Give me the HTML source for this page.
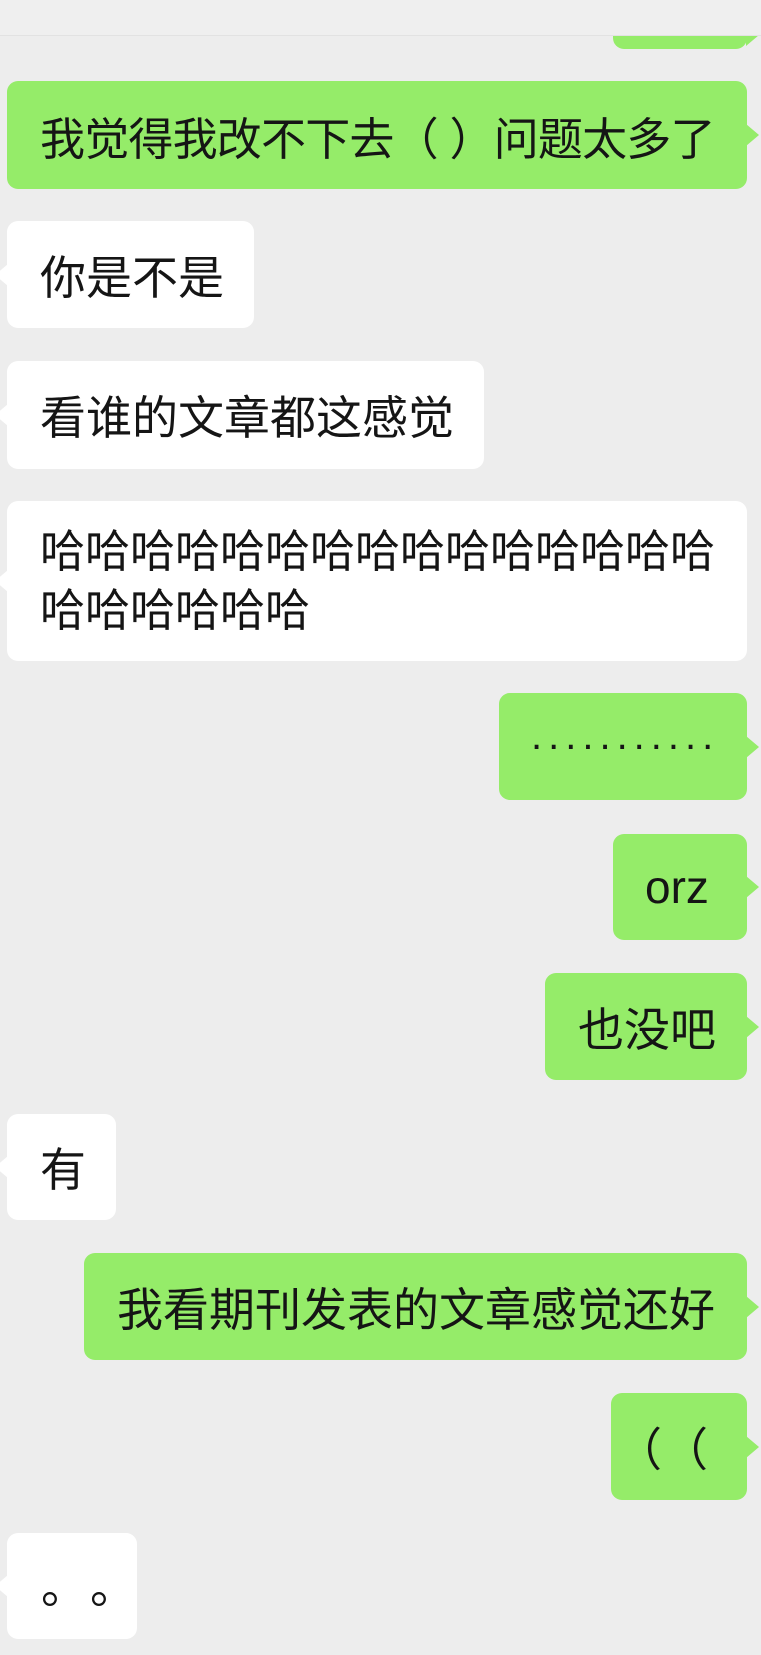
<!DOCTYPE html>
<html><head><meta charset="utf-8"><style>
html,body{margin:0;padding:0}
body{width:761px;height:1655px;background:#ededed;position:relative;overflow:hidden;font-family:"Liberation Sans","Noto Sans CJK SC",sans-serif;color:#151515;text-spacing-trim:space-all}
.top{position:absolute;left:0;top:0;width:761px;height:35px;background:#efefef;border-bottom:1px solid #e2e2e2}
.b{position:absolute;border-radius:11px;font-size:45px;display:flex;align-items:center;box-sizing:border-box;padding-left:33px;white-space:nowrap;text-spacing-trim:space-all}
.g{background:#95ec69}
.w{background:#fff}
.g::after{content:"";position:absolute;right:-12px;top:50%;margin-top:-11px;border-left:13px solid #95ec69;border-top:11px solid transparent;border-bottom:11px solid transparent}
.w::before{content:"";position:absolute;left:-12px;top:50%;margin-top:-11px;border-right:13px solid #fff;border-top:11px solid transparent;border-bottom:11px solid transparent}
.ml{white-space:normal;line-height:59px;align-items:center}
</style></head><body>
<div class="b g" style="left:613px;top:20px;width:134px;height:29px;border-radius:0 0 11px 11px"></div>
<div class="top"></div>
<div class="b g" style="left:7px;top:81px;width:740px;height:108px;padding-left:33px;font-size:45px;letter-spacing:-0.8px">我觉得我改不下去（ ）问题太多了</div>
<div class="b w" style="left:7px;top:221px;width:247px;height:107px;padding-left:33px;font-size:46px">你是不是</div>
<div class="b w" style="left:7px;top:361px;width:477px;height:108px;font-size:46px">看谁的文章都这感觉</div>
<div class="b w ml" style="left:7px;top:501px;width:740px;height:160px;padding-left:33px;font-size:45px"><div>哈哈哈哈哈哈哈哈哈哈哈哈哈哈哈<br>哈哈哈哈哈哈</div></div>
<div class="b g" style="left:499px;top:693px;width:248px;height:107px;padding-left:32px;font-size:40px;letter-spacing:6px"><span style="position:relative;top:-10px">...........</span></div>
<div class="b g" style="left:613px;top:834px;width:134px;height:106px;padding-left:32px;font-size:46px">orz</div>
<div class="b g" style="left:545px;top:973px;width:202px;height:107px;padding-left:33px;font-size:46px">也没吧</div>
<div class="b w" style="left:7px;top:1114px;width:109px;height:106px;padding-left:33px;font-size:46px">有</div>
<div class="b g" style="left:84px;top:1253px;width:663px;height:107px;padding-left:33px;font-size:46px">我看期刊发表的文章感觉还好</div>
<div class="b g" style="left:611px;top:1393px;width:136px;height:107px;padding-left:5px;font-size:46px">（（</div>
<div class="b w" style="left:7px;top:1533px;width:130px;height:106px;padding-left:34px;font-size:46px;letter-spacing:3px"><span style="position:relative;top:-2px">。。</span></div>
</body></html>
